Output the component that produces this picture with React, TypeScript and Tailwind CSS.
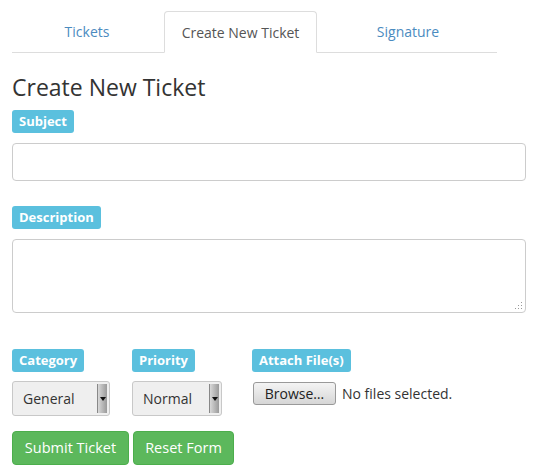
import React from "react";

function Badge({ children }: { children: React.ReactNode }) {
    return (
        <div className="flex w-fit items-center h-[23px] px-[7px] rounded-[3px] bg-[#5bc0de] text-white text-[13px] font-bold leading-none">
            {children}
        </div>
    );
}

function FakeSelect({ value, width }: { value: string; width: string }) {
    return (
        <div className={`flex h-[35px] ${width} border border-[#c8c8c8] rounded-[3px] bg-[#efefef] overflow-hidden`}>
            <div className="flex-1 flex items-center pl-[10px] text-[14px] text-[#333]">{value}</div>
            <div className="w-[10px] my-[2px] mr-[2px] flex items-center justify-center bg-gradient-to-r from-[#d8d8d8] to-[#9a9a9a] border-l border-[#888]">
                <svg width="6" height="4" viewBox="0 0 6 4">
                    <path d="M0 0 H6 L3 4 Z" fill="#111" />
                </svg>
            </div>
        </div>
    );
}

export default function App() {
    return (
        <div className="w-[539px] h-[476px] bg-white font-['Open_Sans',sans-serif] text-[#333] overflow-hidden">
            <div className="px-[12px] pt-[11px]">
                {/* Tabs */}
                <div className="flex w-[485px] border-b border-[#ddd]">
                    <div className="w-[150px] h-[41px] flex items-center justify-center text-[14px] text-[#4b8bbf] mr-[2px]">
                        Tickets
                    </div>
                    <div className="w-[153px] h-[42px] -mb-px flex items-center justify-center text-[14px] text-[#555] bg-white border border-[#ddd] border-b-transparent rounded-t-[4px] mr-[2px]">
                        Create New Ticket
                    </div>
                    <div className="flex-1 h-[41px] flex items-center justify-center text-[14px] text-[#4b8bbf]">
                        Signature
                    </div>
                </div>

                <h1 className="mt-[19px] text-[23px] leading-[30px] text-[#333]">Create New Ticket</h1>

                <div className="mt-[8px]">
                    <Badge>Subject</Badge>
                </div>
                <div className="mt-[10px] h-[38px] w-[514px] border border-[#ccc] rounded-[4px]" />

                <div className="mt-[25px]">
                    <Badge>Description</Badge>
                </div>
                <div className="relative mt-[10px] h-[74px] w-[514px] border border-[#ccc] rounded-[4px]">
                    <svg className="absolute right-[2px] bottom-[2px]" width="9" height="9" viewBox="0 0 9 9">
                        <g fill="#999">
                            <rect x="7" y="1" width="1" height="1" />
                            <rect x="4" y="4" width="1" height="1" />
                            <rect x="7" y="4" width="1" height="1" />
                            <rect x="1" y="7" width="1" height="1" />
                            <rect x="4" y="7" width="1" height="1" />
                            <rect x="7" y="7" width="1" height="1" />
                        </g>
                    </svg>
                </div>

                <div className="mt-[36px] flex">
                    <div className="w-[120px]">
                        <Badge>Category</Badge>
                        <div className="mt-[9px]">
                            <FakeSelect value="General" width="w-[98px]" />
                        </div>
                    </div>
                    <div className="w-[120px]">
                        <Badge>Priority</Badge>
                        <div className="mt-[9px]">
                            <FakeSelect value="Normal" width="w-[90px]" />
                        </div>
                    </div>
                    <div>
                        <Badge>Attach File(s)</Badge>
                        <div className="mt-[10px] flex items-center">
                            <div className="ml-[1px] h-[23px] w-[83px] flex items-center justify-center border border-[#999] rounded-[3px] bg-gradient-to-b from-[#f4f4f4] to-[#d6d6d6] text-[14px] text-[#222]">
                                Browse…
                            </div>
                            <span className="ml-[6px] text-[14px] text-[#333]">No files selected.</span>
                        </div>
                    </div>
                </div>

                <div className="mt-[15px] flex gap-[4px]">
                    <button className="h-[34px] w-[117px] rounded-[4px] bg-[#5cb85c] border border-[#4cae4c] text-white text-[14.5px]">
                        Submit Ticket
                    </button>
                    <button className="h-[34px] w-[101px] rounded-[4px] bg-[#5cb85c] border border-[#4cae4c] text-white text-[14.5px]">
                        Reset Form
                    </button>
                </div>
            </div>
        </div>
    );
}
